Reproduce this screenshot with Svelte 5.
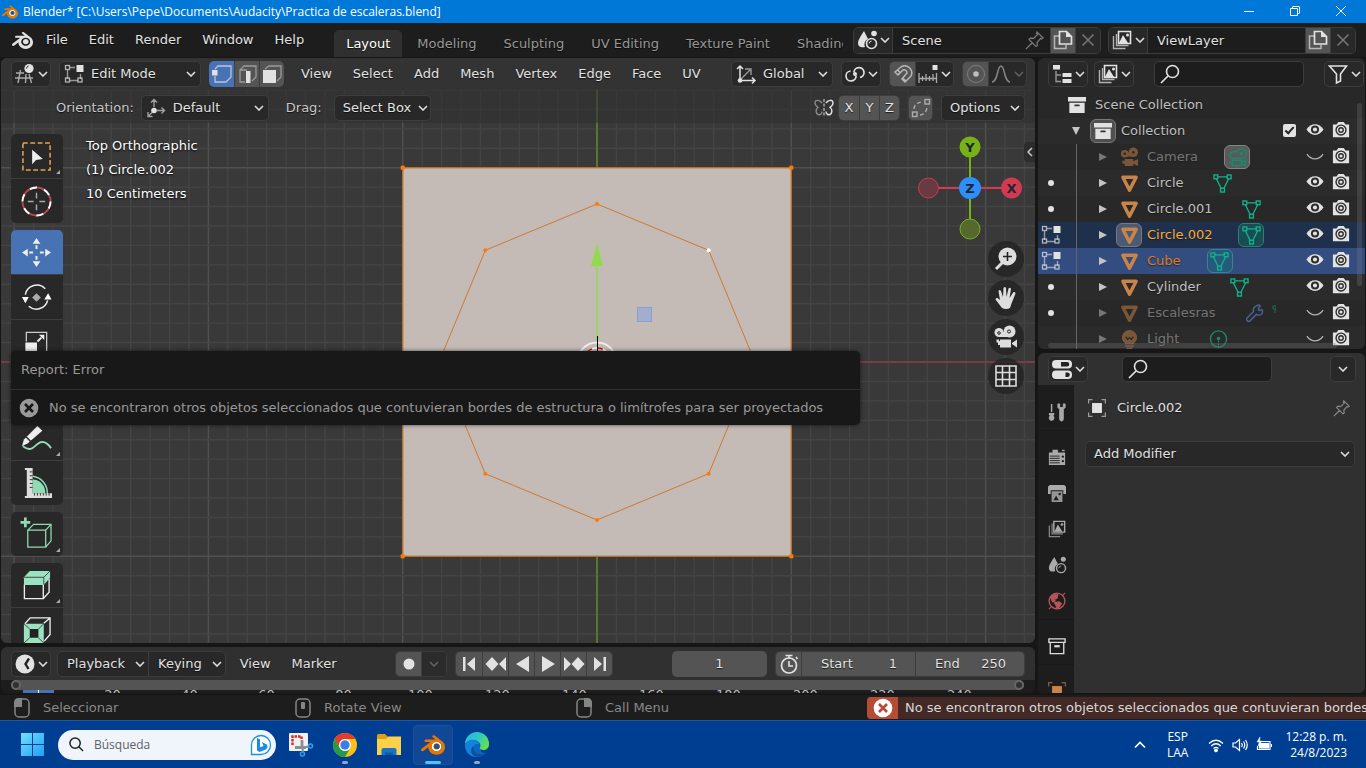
<script lang="ts">
  const blenderPath =
    'M12.51 13.214c.046-.8.438-1.506 1.03-2.006a3.424 3.424 0 0 1 2.212-.79c.85 0 1.631.3 2.211.79.592.5.983 1.206 1.028 2.005.045.823-.285 1.586-.865 2.153a3.389 3.389 0 0 1-2.374.938 3.393 3.393 0 0 1-2.376-.938c-.58-.567-.91-1.33-.865-2.152M7.35 14.831c.006.314.106.922.256 1.398a7.372 7.372 0 0 0 1.593 2.757 8.227 8.227 0 0 0 2.787 2.001 8.947 8.947 0 0 0 3.66.76 8.964 8.964 0 0 0 3.657-.772 8.285 8.285 0 0 0 2.785-2.01 7.428 7.428 0 0 0 1.592-2.762 6.964 6.964 0 0 0 .25-3.074 7.123 7.123 0 0 0-1.016-2.779 7.764 7.764 0 0 0-1.852-2.043h.002L13.566 2.55l-.02-.015c-.492-.378-1.319-.376-1.86.002-.547.382-.609 1.015-.123 1.415l-.001.001 3.126 2.543-9.53.01h-.013c-.788.001-1.545.518-1.695 1.172-.154.665.38 1.217 1.2 1.22V8.9l4.83-.01-8.62 6.617-.034.025c-.813.622-1.075 1.658-.563 2.313.52.667 1.625.668 2.447.004L7.414 14s-.069.52-.063.831zm12.09 1.741c-.97.988-2.326 1.548-3.795 1.55-1.47.004-2.827-.552-3.797-1.538a4.51 4.51 0 0 1-1.036-1.622 4.282 4.282 0 0 1 .282-3.519 4.702 4.702 0 0 1 1.153-1.371c.942-.768 2.141-1.183 3.396-1.185 1.256-.002 2.455.41 3.398 1.175.48.391.87.854 1.152 1.367a4.28 4.28 0 0 1 .522 1.706 4.236 4.236 0 0 1-.239 1.811 4.54 4.54 0 0 1-1.035 1.626';

  // 20x20 interface icons
  const icons: Record<string, string> = {
    editor3d: '<path d="M1 9h8M0 14h18M5.500 6L3 19M11 10l-.5 9M14 10l2.500 9" fill="none" stroke="currentColor" stroke-width="1.400" opacity=".7"/><circle cx="14" cy="4.500" r="4.600" fill="currentColor"/><path d="M11.500 4.500a3 3 0 0 1 2-2.600" stroke="#282828" fill="none"/>',
    editmode: '<path d="M3.500 6v9M6 3.500h5M6 16.500h8M16.500 10v5" stroke="currentColor" stroke-width="1.400" opacity=".6"/><g fill="none" stroke="currentColor" stroke-width="1.300" opacity=".75"><rect x="1.500" y="1.500" width="4" height="4"/><rect x="1.500" y="14" width="4" height="4"/><rect x="14" y="14" width="4" height="4"/></g><rect x="12.500" y="1" width="7" height="7" fill="currentColor"/>',
    vertex: '<path d="M3 5l3-3h13v11l-5 5H3v-6" fill="none" stroke="currentColor" stroke-width="1.300" opacity=".75"/><rect x="0" y="6" width="5.500" height="5.500" fill="currentColor"/>',
    edge: '<path d="M8 18H3V6l4-4h12v11l-4 4M3 6h7" fill="none" stroke="currentColor" stroke-width="1.300" opacity=".5"/><rect x="9" y="7" width="4.500" height="12" fill="currentColor"/>',
    face: '<path d="M3 5l4-3h12v11l-4 4" fill="none" stroke="currentColor" stroke-width="1.300" opacity=".5"/><rect x="1" y="6" width="13" height="13" fill="currentColor"/>',
    axes: '<path d="M4 17V2M1 5l3-3 3 3M4 16.500h15M16 13.500l3 3-3 3" fill="none" stroke="currentColor" stroke-width="1.500"/><path d="M4 16L14 6M9 5h6v6" fill="none" stroke="currentColor" stroke-width="1.400" opacity=".6"/><circle cx="4" cy="16.500" r="2.300" fill="currentColor"/>',
    orient: '<path d="M8 9V2M5 4.500L8 1.500l3 3M11 12.500h7M15.500 9.500l3 3-3 3M6 14.500l-4 4M2 14v4.500h4.500" fill="none" stroke="currentColor" stroke-width="1.400" opacity=".65"/><circle cx="8" cy="12.500" r="2.800" fill="currentColor"/>',
    pivot: '<path d="M9 8.500a5 5 0 1 1 6 5M11 11.500a5 5 0 1 1-5.500-4.500" fill="none" stroke="currentColor" stroke-width="1.700"/><circle cx="10" cy="10" r="2" fill="currentColor"/>',
    magnet: '<path d="M2 8l6-5a7 7 0 0 1 10 9l-6 6-3-3 5-6a3 3 0 0 0-4-3l-5 5zM4.500 6l3 3M9.500 14l3.500 3" fill="none" stroke="currentColor" stroke-width="1.500" opacity=".7"/>',
    increment: '<path d="M1 9v10M4.500 12v5M8 10v7M11.500 12v5M15 10v7M18.500 9v10M1 14.500h17" stroke="currentColor" stroke-width="1.300" opacity=".7"/><rect x="14.500" y="1" width="5" height="5" fill="currentColor"/>',
    prop: '<circle cx="10" cy="10" r="8.500" fill="none" stroke="currentColor" opacity=".3"/><circle cx="10" cy="10" r="2.800" fill="currentColor" opacity=".75"/>',
    falloff: '<path d="M1 18c6 0 5-16 9-16s3 16 9 16" fill="none" stroke="currentColor" stroke-width="1.500" opacity=".5"/>',
    mirror: '<path d="M8 5C6 2 1 1 1 5c0 3 2 3 3 4.500-3 2-2 6 0 7s4-1 4-3" fill="none" stroke="currentColor" stroke-width="1.400" opacity=".5"/><path d="M12 5c2-3 7-4 7 0 0 3-2 3-3 4.500 3 2 2 6 0 7s-4-1-4-3" fill="none" stroke="currentColor" stroke-width="1.500"/><path d="M10 1v18" stroke="currentColor" stroke-dasharray="3 1.500"/>',
    merge: '<g fill="none" stroke="currentColor" opacity=".65" stroke-width="1.400"><rect x="14" y="1.500" width="4.500" height="4.500"/><rect x="1.500" y="14" width="4.500" height="4.500"/><path d="M3 11c0-4 4-7 8-7M9 17c4 0 7-4 7-8" stroke-dasharray="4 2.500"/></g>',
    scene: '<path d="M7 1l4 8a6 6 0 0 0-3 8c-4 1-7 0-7-4 0-3 4-9 6-12z" fill="currentColor"/><circle cx="17" cy="3.500" r="2.800" fill="currentColor"/><circle cx="14.500" cy="13.500" r="5" fill="none" stroke="currentColor" stroke-width="1.600"/><path d="M12 13.500a3 3 0 0 1 2.500-2.500" fill="none" stroke="currentColor"/>',
    layers: '<path d="M1.500 6v12.500h12M4.500 4v11.500h12" fill="none" stroke="currentColor" stroke-width="1.400" opacity=".75"/><path d="M6.500 1.500h12v12h-12z" fill="none" stroke="currentColor" stroke-width="1.600"/><path d="M7 13l4-8 5 8z" fill="currentColor"/><circle cx="15.500" cy="5" r="1.500" fill="currentColor"/>',
    copy: '<path d="M6 6H1.500v12.500H13V15" fill="none" stroke="currentColor" stroke-width="1.500" opacity=".7"/><path d="M6.500 1.500h7l5 5V14h-12z" fill="none" stroke="currentColor" stroke-width="1.700"/><path d="M13 1v6h6z" fill="currentColor"/>',
    close: '<path d="M4.500 4.500l11 11M15.500 4.500l-11 11" stroke="currentColor" stroke-width="1.500"/>',
    pin: '<path d="M12 2l6 6-1.500 1-1-.5-3.500 4 .500 3-1.500 1L4 9.500 5.500 8l3 .500 4-4-1-1zM7.500 12.500L1 19" fill="none" stroke="currentColor" stroke-width="1.300"/>',
    tree: '<rect x="1" y="1" width="7" height="4.500" fill="currentColor"/><path d="M4 7v10.500h5M4 11h5" fill="none" stroke="currentColor" stroke-width="1.400" opacity=".6"/><rect x="10.500" y="9" width="9" height="4" fill="currentColor"/><rect x="10.500" y="15" width="9" height="4" fill="currentColor"/>',
    search: '<circle cx="12.500" cy="7.500" r="6" fill="none" stroke="currentColor" stroke-width="1.600"/><path d="M8 12l-7 7" stroke="currentColor" stroke-width="1.700"/>',
    filter: '<path d="M1.500 2h17l-6 8v7l-4 2v-9z" fill="none" stroke="currentColor" stroke-width="1.600"/>',
    box: '<path d="M0 1h20v5H0zM1.500 7.500h17V19h-17z" fill="currentColor"/><rect x="7" y="9.500" width="6" height="2" rx="1" fill="#333"/>',
    boxline: '<path d="M1 2h18v4H1zM2.500 6v12.500h15V6" fill="none" stroke="currentColor" stroke-width="1.500"/><rect x="7" y="9" width="6" height="2.500" fill="currentColor"/>',
    camera: '<circle cx="5" cy="6" r="4" fill="currentColor"/><circle cx="14" cy="4.500" r="5" fill="currentColor"/><path d="M5 5h9v4H5zM5 11.500h9V14l5-2.500V19l-5-2.500V19H5v-2.500H2.500v-3H5z" fill="currentColor"/><circle cx="5" cy="6" r="1.300" fill="#2b2b2b"/><circle cx="14" cy="4.500" r="1.300" fill="#2b2b2b"/>',
    cameraData: '<g fill="none" stroke="currentColor" stroke-width="1.500"><path d="M4 11a4 4 0 1 1 5-6.500 5.200 5.200 0 1 1 5 6.500zM4.500 13h10v5.500h-10zM14.500 15l4-2v5.500l-4-2M1.500 15.500h3"/><circle cx="14" cy="5.800" r="1.200"/></g>',
    mesh: '<path d="M3 3.500h14L10 17z" fill="none" stroke="currentColor" stroke-width="3.600" stroke-linejoin="round"/>',
    meshData: '<g fill="none" stroke="currentColor" stroke-width="1.400"><path d="M5 3h10M3.500 5l5 10M16.500 5l-5 10"/><rect x="1" y="1" width="4" height="4"/><rect x="15" y="1" width="4" height="4"/><rect x="8" y="15" width="4" height="4"/></g>',
    wrench: '<path d="M12 2c3-2 4 0 4 0l-2 3 1 2 3-1s1 1 0 4c-1 2-4 2-6 1l-7 7c-2 1-4-1-3-3l7-7c-1-3 1-5 3-6z" fill="none" stroke="currentColor" stroke-width="1.600"/>',
    bulb: '<path d="M10 0a8 8 0 0 1 8 8c0 4-3 5-3.500 7h-9C5 13 2 12 2 8a8 8 0 0 1 8-8zM5.500 16h9v1.500h-9zM7 18.500h6V20H7z" fill="currentColor"/><path d="M6 7l2 3 2-2 2 2 2-3" fill="none" stroke="#2b2b2b" stroke-width="1.300"/>',
    bulbData: '<circle cx="10" cy="9.500" r="8.500" fill="none" stroke="currentColor" stroke-width="1.400"/><circle cx="10" cy="9" r="1.800" fill="currentColor"/><path d="M10 11v9" stroke="currentColor" stroke-dasharray="2 1"/>',
    eye: '<path d="M.5 9.500c5-8 14-8 19 0-5 8-14 8-19 0z" fill="currentColor"/><circle cx="10" cy="9.500" r="4.500" fill="#2b2b2b"/><circle cx="10" cy="9.500" r="2.300" fill="currentColor"/>',
    eyeoff: '<path d="M1 8c5 7 13 7 18 0" fill="none" stroke="currentColor" stroke-width="1.500" opacity=".75"/>',
    render: '<path d="M1 4h4l2-3h6l2 3h4v14H1z" fill="currentColor"/><circle cx="10" cy="10" r="5.500" fill="none" stroke="#2b2b2b" stroke-width="1.500"/><circle cx="10" cy="10" r="2.500" fill="none" stroke="#2b2b2b" stroke-width="1.500"/>',
    props: '<rect x="0" y="1" width="20" height="8.500" rx="4" fill="currentColor"/><rect x="0" y="11.500" width="20" height="8.500" rx="4" fill="currentColor"/><path d="M9 3h6a2.300 2.300 0 0 1 0 4.600H9zM13.500 13.500h2a2.300 2.300 0 0 1 0 4.600h-2z" fill="#222"/>',
    tools: '<path d="M4 1v9" stroke="currentColor" stroke-width="1.600"/><path d="M1 11h6v2l-1 1c3 4-1 6-2 6s-5-2-2-6l-1-1z" fill="currentColor"/><path d="M11 1v4l2 2v11a2 2 0 0 0 4 0V7l2-2V1h-2v4h-4V1z" fill="currentColor" stroke="currentColor"/>',
    renderTab: '<path d="M1 5h4V2h6v3h8v14H1z" fill="currentColor"/><path d="M2 9h11M2 11.500h11M2 14h11M2 16.500h11" stroke="#1d1d1d" stroke-width="1"/><circle cx="16.500" cy="9.500" r="1.300" fill="#1d1d1d"/><circle cx="16.500" cy="14.500" r="1.300" fill="#1d1d1d"/><rect x="15.500" y="2" width="3" height="1.500" fill="currentColor"/>',
    printer: '<path d="M2 1h16l2 2v8h-3V7H3v4H0V3z" fill="currentColor"/><path d="M4 8h12v12H4z" fill="currentColor" opacity=".85"/><path d="M6 18l3-5 3 5z" fill="#1d1d1d"/><circle cx="13" cy="11" r="1.400" fill="#1d1d1d"/>',
    world: '<circle cx="10" cy="10" r="8.800" fill="none" stroke="currentColor" stroke-width="1.500"/><path d="M3 6c3-5 5-4 8-3l-1 4-3 1 1 2-3 1zM7 12l5-1 3 2-3 4-2 1-1-3zM19 1l-3 3M1 19l3-3" fill="currentColor" stroke="currentColor" stroke-width="1.200"/>',
    object: '<rect x="4.500" y="4.500" width="11" height="11" fill="currentColor"/><path d="M.7 5V.7H5M15 .7h4.300V5M19.300 15v4.300H15M5 19.300H.7V15" fill="none" stroke="currentColor" stroke-width="1.400" opacity=".6"/>',
    clock: '<circle cx="10" cy="10" r="9.500" fill="currentColor"/><path d="M14 4.500L10.500 10l3 5" fill="none" stroke="#222" stroke-width="2.400"/>',
    dot: '<circle cx="10" cy="10" r="5.500" fill="currentColor"/>',
    first: '<path d="M4 3h2.500v14H4zM16 3v14l-8-7z" fill="currentColor"/>',
    prevKey: '<path d="M6 3l6.500 7L6 17-.5 10zM20 3v14l-7-7z" fill="currentColor"/>',
    playBack: '<path d="M17 2v16L4 10z" fill="currentColor"/>',
    play: '<path d="M4 2v16l13-8z" fill="currentColor"/>',
    nextKey: '<path d="M14 3l6.500 7-6.500 7L7.500 10zM0 3v14l7-7z" fill="currentColor"/>',
    last: '<path d="M13.500 3H16v14h-2.500zM4 3v14l8-7z" fill="currentColor"/>',
    stopwatch: '<circle cx="10" cy="11.500" r="7.500" fill="none" stroke="currentColor" stroke-width="1.700"/><path d="M6.500 1.500h7M10 2v3M17 3l1.500 2M10 7v5h4" fill="none" stroke="currentColor" stroke-width="1.600"/>',
    error: '<circle cx="10" cy="10" r="9.300" fill="currentColor"/><path d="M6 6l8 8M14 6l-8 8" stroke="var(--x)" stroke-width="2.600"/>'
  };

  // 32x32 toolbar icons
  const toolIcons: Record<string, string> = {
    select: '<rect x="2" y="2" width="28" height="28" fill="none" stroke="#dfa554" stroke-width="1.600" stroke-dasharray="5 2.600"/><path d="M11.500 9v15l4-4.500 7-1z" fill="#eee"/>',
    cursor: '<circle cx="16" cy="16" r="14.500" fill="none" stroke="#b04a50" stroke-width="2"/><circle cx="16" cy="16" r="14.500" fill="none" stroke="#fff" stroke-width="2" stroke-dasharray="7.600 7.600"/><path d="M16 7v6M16 19v6M7 16h6M19 16h6" stroke="#aaa" stroke-width="1.500"/>',
    move: '<g fill="#eee"><path d="M16 1l4 6h-8zM16 31l4-6h-8zM1 16l6-4v8zM31 16l-6-4v8z"/><path d="M15 8.500h2v4h-2zM15 19.500h2v4h-2zM8.500 15h4v2h-4zM19.500 15h4v2h-4z"/></g>',
    rotate: '<g fill="none" stroke="#eee" stroke-width="1.600"><path d="M4.500 13A12 12 0 0 1 25 7M27.500 19A12 12 0 0 1 8 25"/></g><path d="M1 15.500h7L4.500 22zM24 18h7.500L28 11.500z" fill="#fff"/><path d="M16 11.500l4.500 4.500-4.500 4.500-4.500-4.500z" fill="#aaa"/>',
    scale: '<path d="M5.500 15V5.500h21V27H17" fill="none" stroke="#ccc" stroke-width="1.300"/><rect x="4.500" y="16" width="12" height="12" fill="#eee"/><path d="M17 15l4-4" stroke="#eee" stroke-width="2"/><path d="M18.500 8H24v5.500z" fill="#eee"/>',
    transform: '<path d="M16 3v26M3 16h26" stroke="#eee"/>',
    annotate: '<path d="M2 24c9 7 12-1 16-3 5-3 9-1 13 5" fill="none" stroke="#8fdcb4" stroke-width="2"/><path d="M17 3l5 5L7 21l-6 3 2-7z" fill="#eee"/><path d="M5.500 14.500l5 5" stroke="#282828" stroke-width="1.500"/>',
    measure: '<path d="M12 12a13 13 0 0 1 13 14H12z" fill="#8fdcb4"/><path d="M12 8.500A17 17 0 0 1 27 27" fill="none" stroke="#8fdcb4" stroke-width="1.500"/><path d="M4 0h8v26h20v5H4v-2h2V2H4z" fill="#ddd"/><path d="M14 26v2.500M17 26v2.500M20 26v2.500M23 26v2.500M26 26v2.500M29 26v2.500M9 4h3M9 8h3M9 12h3M9 16h3M9 20h3" stroke="#333" stroke-width="1"/>',
    addcube: '<path d="M7 11.500h18.500V29H7zM7 11.500l6-6h18v17L25.500 29M25.500 11.500l5.500-6" fill="none" stroke="#8fdcb4" stroke-width="1.300"/><path d="M4.500-1.500v10M-.500 3.500h10" stroke="#8fdcb4" stroke-width="2.800"/>',
    extrude: '<path d="M3.500 15v14.500H23V15M23 29.500l6-6.500V9" fill="none" stroke="#eee" stroke-width="1.400"/><path d="M3 7.500L9 1h21v7l-6.500 7.500H3z" fill="#9be3c0"/><path d="M3 7.500h20.500V15M23.500 7.500L30 1" fill="none" stroke="#444" stroke-width="1"/>',
    inset: '<path d="M4 9l5.500-6H30v17l-6 7M23.500 8.500L30 3" fill="none" stroke="#eee" stroke-width="1.400"/><path d="M3 9h20.500v20H3z" fill="#9be3c0"/><path d="M9 14.500h9v9H9z" fill="#222"/><path d="M3 9l6 5.500M23.500 9L18 14.500M3 29l6-5.500M23.500 29L18 23.500" stroke="#444"/>'
  };

  const toolGroups = [
    ['select', 'cursor'],
    ['move', 'rotate', 'scale', 'transform'],
    ['annotate', 'measure'],
    ['addcube'],
    ['extrude', 'inset']
  ];
  const withCorner = ['select', 'annotate', 'addcube', 'extrude'];

  const appMenus = ['File', 'Edit', 'Render', 'Window', 'Help'];
  const workspaces = ['Layout', 'Modeling', 'Sculpting', 'UV Editing', 'Texture Paint', 'Shading'];
  const meshMenus = ['View', 'Select', 'Add', 'Mesh', 'Vertex', 'Edge', 'Face', 'UV'];

  const objects = [
    { name: 'Camera', icon: 'camera', data: 'cameraData', hidden: true, boxed: true },
    { name: 'Circle', icon: 'mesh', data: 'meshData', dot: true },
    { name: 'Circle.001', icon: 'mesh', data: 'meshData', dot: true },
    { name: 'Circle.002', icon: 'mesh', data: 'meshData', state: 'active', boxed: true },
    { name: 'Cube', icon: 'mesh', data: 'meshData', state: 'selected', boxed: true },
    { name: 'Cylinder', icon: 'mesh', data: 'meshData', dot: true },
    { name: 'Escalesras', icon: 'mesh', data: 'wrench', dot: true, hidden: true },
    { name: 'Light', icon: 'bulb', data: 'bulbData', hidden: true }
  ];

  const tabGroups = [
    ['tools'],
    ['renderTab', 'printer', 'layers', 'scene', 'world'],
    ['boxline'],
    ['object']
  ];

  const frames = Array.from({ length: 12 }, (_, i) => (i + 1) * 20);
  const transport = ['first', 'prevKey', 'playBack', 'play', 'nextKey', 'last'];

  // one grid unit is ten minor lines
  const unit = 194.3;
  const gridX = Array.from({ length: 54 }, (_, i) => i - 30);
  const gridY = Array.from({ length: 34 }, (_, i) => i - 15);
  const ring = [
    [0, -158], [111.7, -111.7], [158, 0], [111.7, 111.7],
    [0, 158], [-111.7, 111.7], [-158, 0], [-111.7, -111.7]
  ];
  const corners = [[-unit, -unit], [unit, -unit], [-unit, unit], [unit, unit]];

  const message =
    'No se encontraron otros objetos seleccionados que contuvieran bordes de estructura o limítrofes para ser proyectados';
</script>

{#snippet icon(name: string)}
  <svg class="icon" viewBox="0 0 20 20" aria-hidden="true">{@html icons[name]}</svg>
{/snippet}

{#snippet chevron()}
  <svg class="chevron" viewBox="0 0 10 6" aria-hidden="true"><path d="M1 1l4 4 4-4" /></svg>
{/snippet}

{#snippet mouse(part: string)}
  <svg class="mouse" viewBox="0 0 16 20" aria-hidden="true">
    <rect x="1" y="1" width="14" height="18" rx="4" fill="none" stroke="#858585" stroke-width="1.5" />
    {#if part === 'left'}<path d="M0 9V5q0-5 5-5h3v9z" fill="#858585" />{/if}
    {#if part === 'middle'}<rect x="6" y="4" width="4" height="7" rx="1" fill="#858585" />{/if}
    {#if part === 'right'}<path d="M16 9V5q0-5-5-5H8v9z" fill="#858585" />{/if}
  </svg>
{/snippet}

<div class="screen">
  <header class="titlebar">
    <svg class="title-logo" viewBox="0 0 24 24" aria-hidden="true">
      <circle cx="15.500" cy="13.500" r="5" fill="#fff" />
      <path d={blenderPath} fill="#ea7600" />
      <circle cx="15.700" cy="13.400" r="2.800" fill="#265787" />
    </svg>
    <h1>Blender* [C:\Users\Pepe\Documents\Audacity\Practica de escaleras.blend]</h1>
    <button aria-label="Minimize"><svg viewBox="0 0 10 10"><path d="M0 5.500h10" /></svg></button>
    <button aria-label="Restore"><svg viewBox="0 0 10 10"><path d="M.5 2.500h7v7h-7zM2.500 2.500V1q0-.5.500-.5h6q.5 0 .5.500v6q0 .5-.5.500H7.500" /></svg></button>
    <button aria-label="Close"><svg viewBox="0 0 10 10"><path d="M0 0l10 10M10 0L0 10" /></svg></button>
  </header>

  <div class="topbar">
    <button class="app-menu" aria-label="Blender">
      <svg viewBox="0 0 24 24"><path d={blenderPath} fill="currentColor" /></svg>
    </button>
    <nav class="menus">
      {#each appMenus as item}<button class="menu">{item}</button>{/each}
    </nav>
    <div class="workspaces">
      {#each workspaces as tab, i}<button class:current={i === 0}>{tab}</button>{/each}
    </div>
    <div class="group datablock">
      <button class="pop" aria-label="Browse scene">{@render icon('scene')}{@render chevron()}</button>
      <input value="Scene" aria-label="Scene name" />
      <button class="pin" aria-label="Pin scene">{@render icon('pin')}</button>
      <button class="seg lit" aria-label="New scene">{@render icon('copy')}</button>
      <button class="seg dim" aria-label="Delete scene">{@render icon('close')}</button>
    </div>
    <div class="group datablock">
      <button class="pop" aria-label="Browse view layer">{@render icon('layers')}{@render chevron()}</button>
      <input value="ViewLayer" aria-label="View layer name" />
      <button class="seg lit" aria-label="New view layer">{@render icon('copy')}</button>
      <button class="seg dim" aria-label="Delete view layer">{@render icon('close')}</button>
    </div>
  </div>

  <main class="areas">
    <div class="column left">
      <section class="area viewport">
        <svg class="canvas" aria-hidden="true">
          <g transform="translate(596 304)">
            {#each gridX as i}
              <line x1={i * unit / 10} x2={i * unit / 10} y1="-304" y2="400" class:major={i % 10 === 0} />
            {/each}
            {#each gridY as i}
              <line y1={i * unit / 10} y2={i * unit / 10} x1="-596" x2="900" class:major={i % 10 === 0} />
            {/each}
            <path class="axis-x" d="M-596 0H900" />
            <path class="axis-y" d="M0-304V400" />
            <rect class="plane" x={-unit} y={-unit} width={unit * 2} height={unit * 2} />
            <polygon class="ring" points={ring.map((p) => p.join(',')).join(' ')} />
            {#each corners as [x, y]}<rect class="vert" x={x - 2} y={y - 2} width="4" height="4" />{/each}
            {#each ring as [x, y], i}<circle class="vert" class:picked={i === 1} cx={x} cy={y} r="2" />{/each}
            <circle r="19.500" fill="none" stroke="#eee" stroke-width="2" />
            <circle r="14" fill="none" stroke="#fff" stroke-width="1.500" />
            <circle r="14" fill="none" stroke="#d01010" stroke-width="1.500" stroke-dasharray="5.500 5.500" />
            <path d="M0-97V-22" stroke="#9bd568" stroke-width="2" />
            <path d="M0-119l6 23h-12z" fill="#93d94e" />
            <path d="M.5-26v18" stroke="#000" />
            <rect x="40.500" y="-54.500" width="14" height="14" fill="#a5adcc" stroke="#84a2d8" />
          </g>
        </svg>

        <div class="header">
          <button class="box pop" aria-label="Editor type">{@render icon('editor3d')}{@render chevron()}</button>
          <label class="box drop mode">{@render icon('editmode')}<select aria-label="Mode"><option>Edit Mode</option></select>{@render chevron()}</label>
          <div class="group selmode">
            <button class="seg on" aria-label="Vertex select">{@render icon('vertex')}</button>
            <button class="seg lit" aria-label="Edge select">{@render icon('edge')}</button>
            <button class="seg lit" aria-label="Face select">{@render icon('face')}</button>
          </div>
          <nav class="menus">
            {#each meshMenus as item}<button class="menu">{item}</button>{/each}
          </nav>
          <div class="header-tools">
            <label class="box drop global">{@render icon('axes')}<select aria-label="Transform orientation"><option>Global</option></select>{@render chevron()}</label>
            <button class="box pop" aria-label="Pivot point">{@render icon('pivot')}{@render chevron()}</button>
            <div class="group">
              <button class="seg lit" aria-label="Snap">{@render icon('magnet')}</button>
              <button class="pop" aria-label="Snapping">{@render icon('increment')}{@render chevron()}</button>
            </div>
            <div class="group">
              <button class="seg lit" aria-label="Proportional editing">{@render icon('prop')}</button>
              <button class="pop off" aria-label="Falloff">{@render icon('falloff')}{@render chevron()}</button>
            </div>
          </div>
        </div>

        <div class="header tool-settings">
          <label class="field">Orientation: <span class="box drop default">{@render icon('orient')}<select><option>Default</option></select>{@render chevron()}</span></label>
          <label class="field">Drag: <span class="box drop drag"><select><option>Select Box</option></select>{@render chevron()}</span></label>
          <div class="mirror">
            {@render icon('mirror')}
            <div class="group xyz">
              {#each ['X', 'Y', 'Z'] as axis}<button class="seg lit">{axis}</button>{/each}
            </div>
            <button class="box seg lit" aria-label="Auto merge">{@render icon('merge')}</button>
            <button class="box options">Options{@render chevron()}</button>
          </div>
        </div>

        <div class="body">
          <div class="toolbar">
            {#each toolGroups as tools}
              <div class="tool-group">
                {#each tools as tool}
                  <button class:on={tool === 'move'} class:corner={withCorner.includes(tool)} aria-label={tool}>
                    <svg viewBox="0 0 32 32">{@html toolIcons[tool]}</svg>
                  </button>
                {/each}
              </div>
            {/each}
          </div>
          <div class="view-info">
            <p>Top Orthographic</p>
            <p>(1) Circle.002</p>
            <p>10 Centimeters</p>
          </div>
          <div class="nav">
            <svg class="gizmo" viewBox="0 0 108 106">
              <path d="M54 12v82" stroke="#76b217" stroke-width="2" />
              <path d="M12 53h84" stroke="#d23a52" stroke-width="2" />
              <circle cx="12.500" cy="53" r="10" fill="#6a3a42" stroke="#c93b50" />
              <circle cx="54" cy="94" r="10" fill="#55692f" stroke="#76b217" />
              <circle cx="54" cy="12" r="10.500" fill="#76b217" />
              <circle cx="95.500" cy="53" r="10.500" fill="#d23a52" />
              <circle cx="54" cy="53" r="11" fill="#2c8ffb" />
              <text x="54" y="17">Y</text>
              <text x="95.500" y="58">X</text>
              <text x="54" y="58">Z</text>
            </svg>
            <button aria-label="Zoom"><svg viewBox="0 0 24 24"><path d="M2 22l7-7" stroke="#ddd" stroke-width="3" /><circle cx="13.500" cy="9.500" r="9" fill="#ddd" /><path d="M13.500 5v9M9 9.500h9" stroke="#222" stroke-width="1.600" /></svg></button>
            <button aria-label="Pan"><svg viewBox="0 0 24 24"><path d="M8 22L1.500 13.500q0-2 2-1.500L6 14 4.500 5q1-2 2.500 0l2 6 .5-9q1.500-2 2.500 0l.5 9 2-8.500q2-1.500 2.500.5L15.500 12l4-6q2-.5 2 1.500l-4 10L16 22q-4 2-8 0z" fill="#ddd" /></svg></button>
            <button aria-label="Camera view"><svg viewBox="0 0 24 24"><circle cx="5" cy="7.500" r="4.500" fill="#ddd" /><circle cx="15.500" cy="6.500" r="6" fill="#ddd" /><path d="M5 7h10v5H5zM2.500 14.500H5V16h1v-1.500h11v8H6V20H4v-2.500h-1.500zM18 18l5-3.500v8L18 19z" fill="#ddd" /><circle cx="5" cy="8" r="1.300" fill="none" stroke="#222" /><circle cx="15" cy="6.500" r="1.500" fill="none" stroke="#222" /></svg></button>
            <button aria-label="Orthographic"><svg viewBox="0 0 24 24"><path d="M2 2h20v20H2zM8.500 2v20M15.500 2v20M2 8.500h20M2 15.500h20" fill="none" stroke="#ddd" stroke-width="1.600" /></svg></button>
          </div>
          <button class="sidebar-toggle" aria-label="Show sidebar"><svg viewBox="0 0 6 10"><path d="M5 1L1 5l4 4" /></svg></button>
        </div>

        <div class="report" role="alert">
          <h2>Report: Error</h2>
          <p>{@render icon('error')}{message}</p>
        </div>
      </section>

      <section class="area timeline">
        <div class="header">
          <button class="box pop" aria-label="Editor type">{@render icon('clock')}{@render chevron()}</button>
          <div class="group playback">
            <button class="text-drop">Playback{@render chevron()}</button>
            <button class="text-drop">Keying{@render chevron()}</button>
          </div>
          <nav class="menus">
            <button class="menu">View</button>
            <button class="menu">Marker</button>
          </nav>
          <div class="header-tools">
            <div class="group record">
              <button class="seg lit" aria-label="Auto keying">{@render icon('dot')}</button>
              <button class="seg off" aria-label="Keying set">{@render chevron()}</button>
            </div>
            <div class="group transport">
              {#each transport as name}<button class="seg lit" aria-label={name}>{@render icon(name)}</button>{/each}
            </div>
            <input class="frame" value="1" aria-label="Current frame" />
            <div class="group range">
              <button class="seg lit" aria-label="Preview range">{@render icon('stopwatch')}</button>
              <label>Start<input value="1" /></label>
              <label>End<input value="250" /></label>
            </div>
          </div>
        </div>
        <div class="track"><i></i><i></i></div>
        <div class="frames">
          <b class="playhead"></b>
          {#each frames as frame}<span>{frame}</span>{/each}
        </div>
      </section>
    </div>

    <div class="column right">
      <section class="area outliner">
        <div class="header">
          <button class="box pop" aria-label="Editor type">{@render icon('tree')}{@render chevron()}</button>
          <button class="box pop" aria-label="Display mode">{@render icon('layers')}{@render chevron()}</button>
          <label class="box search">{@render icon('search')}<input aria-label="Search objects" /></label>
          <button class="box pop" aria-label="Filter">{@render icon('filter')}{@render chevron()}</button>
        </div>
        <ul class="tree">
          <li class="root">{@render icon('box')}<span class="name">Scene Collection</span></li>
          <li class="collection">
            <span class="arrow open"></span>
            <span class="badge">{@render icon('box')}</span>
            <span class="name">Collection</span>
            <span class="toggles">
              <input type="checkbox" checked aria-label="Exclude from view layer" />
              {@render icon('eye')}{@render icon('render')}
            </span>
          </li>
          {#each objects as obj}
            <li class="object {obj.state ?? ''}" class:hidden={obj.hidden}>
              <span class="status">
                {#if obj.state}{@render icon('editmode')}{:else if obj.dot}<i></i>{/if}
              </span>
              <span class="arrow"></span>
              <span class="badge obj" class:framed={obj.state === 'active'}>{@render icon(obj.icon)}</span>
              <span class="name">{obj.name}</span>
              <span class="badge data" class:blue={obj.data === 'wrench'} class:framed={obj.boxed}>{@render icon(obj.data)}</span>
              {#if obj.data === 'wrench'}
                <svg class="more" viewBox="0 0 4 8"><path d="M1 1h3v3H1zM3 4v4" /></svg>
              {/if}
              <span class="toggles">{@render icon(obj.hidden ? 'eyeoff' : 'eye')}{@render icon('render')}</span>
            </li>
          {/each}
        </ul>
        <div class="vscroll"></div>
        <div class="hscroll"></div>
      </section>

      <section class="area properties">
        <div class="header">
          <button class="box pop" aria-label="Editor type">{@render icon('props')}{@render chevron()}</button>
          <label class="box search">{@render icon('search')}<input aria-label="Search properties" /></label>
          <button class="box more-options" aria-label="Options">{@render chevron()}</button>
        </div>
        <div class="split">
          <nav class="tabs">
            {#each tabGroups as group}
              <div>
                {#each group as tab}<button class="tab-{tab}" aria-label={tab}>{@render icon(tab)}</button>{/each}
              </div>
            {/each}
          </nav>
          <div class="panel">
            <div class="crumb">{@render icon('object')}<span>Circle.002</span><button aria-label="Pin">{@render icon('pin')}</button></div>
            <label class="box drop modifier"><select aria-label="Add modifier"><option>Add Modifier</option></select>{@render chevron()}</label>
          </div>
        </div>
      </section>
    </div>
  </main>

  <footer class="statusbar">
    <span class="hint">{@render mouse('left')}Seleccionar</span>
    <span class="hint">{@render mouse('middle')}Rotate View</span>
    <span class="hint">{@render mouse('right')}Call Menu</span>
    <div class="banner"><span>{@render icon('error')}</span><p>{message}</p></div>
  </footer>

  <div class="taskbar">
    <button class="start" aria-label="Inicio">
      <svg viewBox="0 0 24 24">
        <defs><linearGradient id="win" x2="1" y2="1"><stop stop-color="#6fe3ff" /><stop offset="1" stop-color="#1ea0f2" /></linearGradient></defs>
        <path d="M0 0h11.500v11.500H0zM12.500 0H24v11.500H12.500zM0 12.500h11.500V24H0zM12.500 12.500H24V24H12.500z" fill="url(#win)" />
      </svg>
    </button>
    <label class="task-search">
      <svg class="lens" viewBox="0 0 16 16"><circle cx="6.500" cy="6.500" r="5.500" /><path d="M10.500 10.500L15 15" /></svg>
      <input placeholder="Búsqueda" />
      <svg class="bing" viewBox="0 0 22 22">
        <path d="M1.500 20.500V11a9.500 9.500 0 1 1 9.500 9.500z" fill="#fff" stroke="#1d8fe0" stroke-width="1.300" />
        <path d="M7 4l3 1.200v8L13.500 12l-1.700-4 5 2.500c1.500 2 .5 4-1 5L9.500 18 7 16.500z" fill="#1b8be4" />
      </svg>
    </label>
    <button class="app" aria-label="Recortes">
      <svg viewBox="0 0 24 24"><rect x="0" y="0" width="19" height="18" rx="1" fill="#f1f1f3" /><path d="M3.500 12V3.500h9V6" fill="none" stroke="#d92b1f" stroke-width="2.500" stroke-dasharray="2.500 1" /><path d="M13 7v9M6 14.500h11" stroke="#8b8f94" stroke-width="2.800" /><path d="M17 14l3-.500M13.500 16l.5 3" stroke="#888" stroke-width="2" /><circle cx="21.500" cy="13" r="2" fill="none" stroke="#2d9ff0" stroke-width="1.600" /><circle cx="13.500" cy="21" r="2" fill="none" stroke="#2d9ff0" stroke-width="1.600" /></svg>
    </button>
    <button class="app running" aria-label="Chrome">
      <svg viewBox="0 0 24 24"><circle cx="12" cy="12" r="12" fill="#fbc116" /><path d="M1.600 6A12 12 0 0 1 22.400 6H12a6 6 0 0 0-5.200 9z" fill="#e33b2e" /><path d="M1.600 6A12 12 0 0 0 12 24l5.200-9a6 6 0 0 1-10.400 0z" fill="#269a48" /><circle cx="12" cy="12" r="6" fill="#fff" /><circle cx="12" cy="12" r="4.700" fill="#3a7ded" /></svg>
    </button>
    <button class="app" aria-label="Explorador">
      <svg viewBox="0 0 24 24"><path d="M0 2.500Q0 1 1.500 1H8l2.500 2.500V7H0z" fill="#e0a010" /><path d="M0 6h9l2-2.500h13V22H0z" fill="#fccf4d" /><path d="M4.500 22v-5q0-2 2-2h11q2 0 2 2v5z" fill="#1873c5" /><path d="M8 22v-2.500h8V22z" fill="#0e5aa5" /></svg>
    </button>
    <button class="app active" aria-label="Blender">
      <svg viewBox="0 0 24 24"><circle cx="15.500" cy="13.500" r="5" fill="#fff" /><path d={blenderPath} fill="#ea7600" /><circle cx="15.700" cy="13.400" r="2.900" fill="#265787" /></svg>
    </button>
    <button class="app running" aria-label="Edge">
      <svg viewBox="0 0 24 24">
        <defs><linearGradient id="edge-top" x2="1" y2=".6"><stop stop-color="#2db4ec" /><stop offset=".5" stop-color="#2fc4c8" /><stop offset="1" stop-color="#65e04b" /></linearGradient></defs>
        <circle cx="12" cy="12" r="12" fill="#0b63c4" />
        <path d="M0 11A12 12 0 0 1 24 11c0 4-3 6-6 6-3 0-4-1-3-2.500C17 11 13 7 9 7c-4 0-8 2-9 4z" fill="url(#edge-top)" />
        <path d="M0 12C1 8 5 6.500 8 6.700c4 .3 6 2.800 6 4.500-3-1-6 1-6 5 0 3 2 6 5 7.800C5 24.500 0 19 0 12z" fill="#1183dc" />
        <path d="M8.500 15c0 5 5 8 12 5-3 4-9 5-12 2.500-3-2-3-7-.500-9.500z" fill="#134e99" />
        <path d="M24.500 14.500c-3 3.500-7 3-9.500 1.500l2 3.500 5 .500z" fill="#003e92" />
      </svg>
    </button>
    <div class="tray">
      <button aria-label="Iconos ocultos"><svg class="up" viewBox="0 0 12 8"><path d="M1 6.500L6 1.500l5 5" /></svg></button>
      <button class="lang">ESP<br />LAA</button>
      <button class="net" aria-label="Red y volumen">
        <svg viewBox="0 0 16 16"><path d="M1 6.500Q8 0 15 6.500M3.200 9q4.800-4.500 9.600 0M5.500 11.500q2.500-2.300 5 0" /><circle cx="8" cy="13.300" r="1.300" fill="#fff" /></svg>
        <svg viewBox="0 0 16 16"><path d="M1 6v4h2.500L7.500 13.500v-11L3.500 6zM9.500 6q1.500 2 0 4M11.500 4.500q2.500 3.500 0 7M13.500 3q3.500 5 0 10" /></svg>
        <svg viewBox="0 0 16 16"><path d="M6 4.500h8v8H1.500V9M15.500 7v3" /><rect x="3.500" y="6.500" width="9" height="4.500" fill="#fff" /><path d="M4 0L1 5h2.500L2 9l4-5H3.500z" fill="#fff" stroke-width=".500" /></svg>
      </button>
      <button class="time">12:28 p. m.<br />24/8/2023</button>
    </div>
  </div>
</div>

<style>
  :global(body) {
    margin: 0;
    background: #161616;
  }

  .screen {
    display: flex;
    flex-direction: column;
    height: 100vh;
    overflow: hidden;
    background: #161616;
    color: #e2e2e2;
    font: 13px/20px 'DejaVu Sans', sans-serif;
  }

  button,
  input,
  select {
    margin: 0;
    padding: 0;
    border: 0;
    outline: 0;
    border-radius: 0;
    background: none;
    color: inherit;
    font: inherit;
    text-shadow: inherit;
    min-width: 0;
  }

  select {
    appearance: none;
    flex: 1;
  }

  .icon {
    flex: none;
    display: block;
    width: 20px;
    height: 20px;
    overflow: visible;
  }

  .chevron {
    flex: none;
    width: 10px;
    height: 6px;
    fill: none;
    stroke: #ddd;
    stroke-width: 1.6;
  }

  /* window title */
  .titlebar {
    display: flex;
    align-items: center;
    flex: none;
    height: 23px;
    padding: 0 2px;
    background: #0078d7;
    color: #fff;
  }

  .titlebar h1 {
    flex: 1;
    margin: 0;
    font: 12px/23px 'Open Sans', 'Noto Sans', sans-serif;
  }

  .title-logo {
    width: 16px;
    height: 16px;
    margin-right: 5px;
  }

  .titlebar button {
    width: 46px;
    height: 23px;
  }

  .titlebar button svg {
    display: block;
    width: 10px;
    height: 10px;
    margin: -2px auto 0;
    fill: none;
    stroke: #fff;
    overflow: visible;
  }

  /* shared controls */
  .topbar,
  .header {
    display: flex;
    align-items: center;
    flex: none;
    box-sizing: border-box;
    text-shadow: 0 1px 1px rgba(0, 0, 0, 0.7);
  }

  .box,
  .group {
    display: flex;
    align-items: center;
    flex: none;
    box-sizing: border-box;
    height: 26px;
    border: 1px solid #3d3d3d;
    border-radius: 5px;
    background: #282828;
    overflow: hidden;
  }

  .group > * + * {
    border-left: 1px solid #3d3d3d;
  }

  .pop {
    display: flex;
    align-items: center;
    justify-content: center;
    gap: 3px;
    box-sizing: border-box;
    width: 40px;
    height: 26px;
  }

  .group .pop {
    width: 38px;
  }

  .seg {
    display: flex;
    align-items: center;
    justify-content: center;
    flex: none;
    box-sizing: border-box;
    width: 25px;
    height: 26px;
  }

  .lit {
    background: #545454;
  }

  .on {
    background: #4772b3;
  }

  .off .chevron {
    opacity: 0.3;
  }

  .dim {
    background: #282828;
    color: #777;
  }

  .drop {
    gap: 7px;
    padding: 0 4px;
  }

  .menus {
    display: flex;
    flex: none;
    gap: 1px;
  }

  .menu {
    padding: 0 10px;
    height: 26px;
  }

  .search {
    width: 150px;
    padding-left: 5px;
    background: #1d1d1d;
  }

  .search input {
    flex: 1;
    padding: 0 5px;
  }

  /* top bar */
  .topbar {
    height: 34px;
    padding: 0 10px 0 12px;
    background: #1d1d1d;
  }

  .app-menu svg {
    display: block;
    width: 21px;
    height: 21px;
  }

  .app-menu {
    margin-right: 3px;
  }

  .workspaces {
    display: flex;
    align-self: flex-end;
    flex: 1 1 0;
    gap: 3px;
    min-width: 0;
    margin: 0 10px 0 20px;
    overflow: hidden;
    color: #989898;
  }

  .workspaces button {
    flex: none;
    height: 27px;
    padding: 0 12px;
    border-radius: 5px 5px 0 0;
  }

  .workspaces .current {
    background: #303030;
    color: #fff;
  }

  .datablock {
    width: 248px;
    height: 27px;
    background: #1d1d1d;
  }

  .datablock + .datablock {
    margin-left: 7px;
  }

  .datablock .pop {
    background: #282828;
  }

  .datablock input {
    flex: 1;
    height: 26px;
    padding-left: 9px;
  }

  .datablock .pin {
    border: 0;
    margin-right: 5px;
    color: #777;
  }

  /* areas */
  .areas {
    display: flex;
    flex: 1;
    gap: 3px;
    min-height: 0;
    padding: 1px 1px 2px;
  }

  .column {
    display: flex;
    flex-direction: column;
    gap: 4px;
    min-width: 0;
    min-height: 0;
  }

  .left {
    flex: 1;
  }

  .right {
    flex: none;
    width: 327px;
  }

  .area {
    position: relative;
    display: flex;
    flex-direction: column;
    box-sizing: border-box;
    border-radius: 6px;
    overflow: hidden;
    background: #303030;
  }

  .viewport {
    flex: 1;
    min-height: 0;
    background: #393939;
  }

  .viewport .header {
    position: relative;
    height: 32px;
    padding: 0 8px 0 10px;
    background: #333;
  }

  .viewport .header > .box + .box,
  .selmode {
    margin-left: 8px;
  }

  .selmode {
    border: 0;
  }

  .mode {
    width: 142px;
  }

  .viewport .header .menus {
    margin-left: 7px;
  }

  .header-tools {
    display: flex;
    align-items: center;
    gap: 8px;
    margin-left: auto;
  }

  .global {
    width: 102px;
  }

  .viewport .header.tool-settings {
    height: 33px;
    padding: 2px 10px 0 55px;
    background: rgba(48, 48, 48, 0.6);
  }

  .field {
    display: flex;
    align-items: center;
    gap: 7px;
    margin-right: 17px;
    color: #c8c8c8;
  }

  .field .box {
    color: #e2e2e2;
  }

  .default {
    width: 128px;
  }

  .drag {
    gap: 0;
    width: 97px;
    margin-left: 5px;
    padding: 0 2px 0 8px;
  }

  .mirror {
    display: flex;
    align-items: center;
    gap: 8px;
    margin-left: auto;
  }

  .mirror .icon {
    color: #ddd;
  }

  .xyz {
    margin-left: -4px;
  }

  .xyz .seg {
    width: 20px;
  }

  .options {
    justify-content: space-between;
    width: 84px;
    padding: 0 4px 0 8px;
  }

  .canvas {
    position: absolute;
    width: 100%;
    height: 100%;
  }

  .canvas line {
    stroke: #444;
    stroke-width: 1.4;
  }

  .canvas .major {
    stroke: #505050;
  }

  .axis-x {
    stroke: #863a44;
    stroke-width: 1.6;
  }

  .axis-y {
    stroke: #5f812c;
    stroke-width: 1.6;
  }

  .plane {
    fill: #c5bbb6;
    stroke: #b87228;
    stroke-width: 1.4;
  }

  .ring {
    fill: none;
    stroke: #cb7a32;
  }

  .vert {
    fill: #ff7a00;
  }

  .vert.picked {
    fill: #fff;
  }

  .body {
    position: relative;
    display: flex;
    flex: 1;
    min-height: 0;
    overflow: hidden;
    padding: 11px 11px 0 10px;
  }

  .toolbar {
    display: flex;
    flex-direction: column;
    gap: 7px;
    width: 52px;
  }

  .tool-group {
    display: flex;
    flex: none;
    flex-direction: column;
    gap: 1px;
    border-radius: 5px;
    overflow: hidden;
    background: #3d3d3d;
  }

  .tool-group button {
    position: relative;
    height: 44px;
    background: #282828;
  }

  .tool-group button.on {
    background: #4772b3;
  }

  .tool-group svg {
    display: block;
    width: 31px;
    height: 31px;
    margin: 0 10px;
    overflow: visible;
  }

  .corner::after {
    content: '';
    position: absolute;
    right: 3px;
    bottom: 4px;
    border: 2px solid transparent;
    border-right-color: #aaa;
    border-bottom-color: #aaa;
  }

  .view-info {
    flex: 1;
    margin-left: 23px;
    color: #fff;
    line-height: 24px;
    text-shadow: 0 1px 2px #000;
  }

  .view-info p {
    margin: 0;
  }

  .nav {
    display: flex;
    flex-direction: column;
    align-items: flex-end;
    gap: 3px;
    margin-top: 1px;
  }

  .gizmo {
    flex: none;
    width: 108px;
    height: 106px;
    margin-bottom: -3px;
    font-weight: bold;
    text-anchor: middle;
  }

  .gizmo text {
    fill: #1c2530;
  }

  .nav button {
    flex: none;
    width: 36px;
    height: 36px;
    border-radius: 50%;
    background: rgba(34, 34, 34, 0.75);
  }

  .nav button svg {
    display: block;
    width: 24px;
    height: 24px;
    margin: 0 auto;
  }

  .sidebar-toggle {
    position: absolute;
    top: 19px;
    right: 0;
    width: 11px;
    height: 20px;
    border-radius: 4px 0 0 4px;
    background: #2c2c2c;
  }

  .sidebar-toggle svg {
    display: block;
    width: 6px;
    height: 10px;
    margin: 0 auto;
    fill: none;
    stroke: #ccc;
    stroke-width: 1.5;
  }

  .report {
    position: absolute;
    left: 10px;
    top: 293px;
    width: 849px;
    border-radius: 5px;
    background: #181818;
    color: #999;
    box-shadow: 0 0 4px rgba(0, 0, 0, 0.6);
    --x: #181818;
  }

  .report h2 {
    margin: 0;
    padding: 0 10px;
    border-bottom: 1px solid #303030;
    font-size: 13px;
    font-weight: normal;
    line-height: 38px;
  }

  .report p {
    display: flex;
    align-items: center;
    gap: 10px;
    height: 35px;
    margin: 0;
    padding: 0 8px;
    white-space: nowrap;
  }

  /* timeline */
  .timeline {
    flex: none;
    height: 46px;
    background: #1d1d1d;
  }

  .timeline .header {
    height: 33px;
    padding: 0 10px;
    background: #303030;
  }

  .playback {
    margin: 0 4px 0 6px;
  }

  .text-drop {
    display: flex;
    align-items: center;
    justify-content: space-between;
    gap: 10px;
    height: 26px;
    padding: 0 3px 0 9px;
  }

  .record .off {
    background: #2b2b2b;
  }

  .transport .seg {
    width: 26px;
  }

  .frame {
    width: 95px;
    height: 26px;
    margin: 0 0 0 51px;
    border-radius: 5px;
    background: #545454;
    text-align: center;
  }

  .range label {
    display: flex;
    align-items: center;
    justify-content: space-between;
    box-sizing: border-box;
    width: 114px;
    height: 26px;
    padding: 0 18px 0 19px;
    background: #545454;
  }

  .range label + label {
    width: 109px;
  }

  .range input {
    width: 40px;
    text-align: right;
  }

  .track {
    display: flex;
    justify-content: space-between;
    flex: none;
    height: 10px;
    margin: 0 11px 0 10px;
    border-radius: 5px;
    background: #545454;
  }

  .track i {
    box-sizing: border-box;
    width: 10px;
    height: 10px;
    border: 2px solid #666;
    border-radius: 50%;
    background: #303030;
  }

  .frames {
    display: flex;
    flex: 1;
    min-height: 0;
    overflow: hidden;
    color: #bbb;
    line-height: 14px;
  }

  .frames span {
    flex: none;
    width: 77px;
    margin-top: -2px;
    text-align: center;
  }

  .playhead {
    flex: none;
    width: 31px;
    height: 4px;
    margin: 0 20px 0 22px;
    background: linear-gradient(90deg, #4772b3 15px, #fff 15px 16px, #4772b3 16px);
  }

  /* outliner */
  .outliner {
    flex: none;
    height: 291px;
    background: #282828;
  }

  .outliner .header {
    gap: 6px;
    height: 34px;
    padding: 0 1px 2px 10px;
  }

  .outliner .search {
    margin: 0 auto;
  }

  .tree {
    margin: 0;
    padding: 0;
    list-style: none;
    color: #c0c0c0;
  }

  .tree li {
    position: relative;
    display: flex;
    align-items: center;
    height: 26px;
    padding-right: 15px;
    text-shadow: 0 1px 1px rgba(0, 0, 0, 0.5);
  }

  .tree li:nth-child(even) {
    background: #2b2b2b;
  }

  .tree li.root {
    gap: 8px;
    padding-left: 29px;
  }

  .tree .icon {
    color: #e2e2e2;
  }

  .root .icon,
  .collection .badge .icon {
    transform: scale(0.9);
  }

  .tree li.collection {
    padding-left: 34px;
  }

  .arrow {
    flex: none;
    width: 0;
    margin-left: 9px;
    border: 4px solid transparent;
    border-left: 8px solid #c4c4c4;
    border-right: 0;
  }

  .arrow.open {
    margin: 0 6px 0 0;
    border: 4px solid transparent;
    border-top: 8px solid #c4c4c4;
    border-bottom: 0;
  }

  .badge {
    display: flex;
    align-items: center;
    justify-content: center;
    flex: none;
    box-sizing: border-box;
    width: 26px;
    height: 24px;
    border: 1px solid transparent;
    border-radius: 6px;
  }

  .collection .badge {
    margin: 0 5px 0 4px;
    border-color: #777;
    background: #505050;
  }

  .status {
    display: flex;
    justify-content: center;
    width: 26px;
    margin-right: 26px;
  }

  .status i {
    width: 6px;
    height: 6px;
    border-radius: 50%;
    background: #e2e2e2;
  }

  .object::before {
    content: '';
    position: absolute;
    left: 38px;
    top: 0;
    width: 1px;
    height: 26px;
    background: #666;
  }

  .object .obj {
    margin: 0 5px 0 9px;
  }

  .tree .obj .icon {
    width: 19px;
    height: 19px;
    color: #c98449;
  }

  .tree .data {
    margin-left: 26px;
  }

  .tree .data .icon {
    width: 19px;
    height: 19px;
    color: #0fb58c;
  }

  .tree .data.blue .icon {
    color: #5878c0;
  }

  .obj.framed {
    border-color: #778;
    background: #4b5b74;
  }

  .data.framed {
    border-color: #30806f;
    background: #1a4c55;
  }

  .hidden .data.framed {
    border-color: #aaa;
    background: #707070;
  }

  .hidden .name,
  .hidden .arrow,
  .hidden .badge,
  .hidden .more {
    opacity: 0.5;
  }

  .hidden .data {
    opacity: 0.7;
  }

  .more {
    width: 4px;
    height: 8px;
    margin: -8px 0 0 4px;
    fill: none;
    stroke: #0fb58c;
  }

  .tree li.active {
    background: #1e304c;
  }

  .active .name {
    color: #ffaa2b;
  }

  .tree li.selected {
    background: #334d80;
  }

  .selected .name {
    color: #e07a12;
  }

  .selected .data.framed {
    border-color: #408090;
    background: #265a7a;
  }

  .toggles {
    display: flex;
    align-items: center;
    gap: 8px;
    margin-left: auto;
  }

  .toggles .icon {
    width: 18px;
    height: 18px;
    margin-bottom: 2px;
  }

  .toggles input {
    appearance: none;
    position: relative;
    width: 13px;
    height: 13px;
    margin: 0 2px 2px 0;
    border-radius: 2px;
    background: #e2e2e2;
  }

  .toggles input:checked::after {
    content: '';
    position: absolute;
    left: 4px;
    top: 1px;
    width: 3px;
    height: 7px;
    border: solid #222;
    border-width: 0 2px 2px 0;
    transform: rotate(42deg);
  }

  .vscroll,
  .hscroll {
    position: absolute;
    border-radius: 3px;
    background: rgba(120, 120, 120, 0.3);
  }

  .vscroll {
    top: 45px;
    right: 3px;
    width: 5px;
    height: 183px;
  }

  .hscroll {
    left: 10px;
    right: 28px;
    bottom: 1px;
    height: 5px;
  }

  /* properties */
  .properties {
    flex: 1;
    min-height: 0;
  }

  .properties .header {
    height: 32px;
    padding: 0 9px 0 10px;
  }

  .properties .search {
    margin: 0 auto 0 34px;
  }

  .more-options {
    justify-content: center;
    width: 26px;
  }

  .split {
    display: flex;
    flex: 1;
    min-height: 0;
  }

  .tabs {
    display: flex;
    flex-direction: column;
    gap: 9px;
    width: 36px;
    padding-top: 9px;
    background: #1d1d1d;
    color: #aaa;
  }

  .tabs div {
    flex: none;
    border-bottom: 1px solid #181818;
    margin-bottom: -1px;
  }

  .tabs button {
    display: flex;
    align-items: center;
    justify-content: center;
    box-sizing: border-box;
    width: 36px;
    height: 36px;
    padding-left: 2px;
  }

  .tabs .icon {
    width: 18px;
    height: 18px;
  }

  .tab-world {
    color: #b5555a;
  }

  .tab-boxline {
    color: #ddd;
  }

  .tab-object {
    color: #c98449;
  }

  .panel {
    flex: 1;
    padding: 10px 10px 0 11px;
  }

  .crumb {
    display: flex;
    align-items: center;
    gap: 11px;
    height: 26px;
    margin-bottom: 20px;
    padding: 0 4px 0 3px;
    text-shadow: 0 1px 1px rgba(0, 0, 0, 0.6);
  }

  .crumb .icon {
    width: 18px;
    height: 18px;
  }

  .crumb button {
    margin-left: auto;
    color: #888;
  }

  .modifier {
    padding-left: 8px;
    text-shadow: 0 1px 1px rgba(0, 0, 0, 0.6);
  }

  /* status bar */
  .statusbar {
    display: flex;
    align-items: center;
    flex: none;
    height: 25px;
    padding-left: 14px;
    background: #1d1d1d;
    color: #888;
    overflow: hidden;
  }

  .hint {
    display: flex;
    align-items: center;
    flex: none;
    gap: 13px;
    width: 281px;
  }

  .mouse {
    width: 16px;
    height: 20px;
  }

  .banner {
    display: flex;
    flex: 1;
    min-width: 0;
    height: 22px;
    margin-left: 10px;
    border-radius: 4px 0 0 4px;
    background: #432925;
    color: #d8d8d8;
    line-height: 22px;
    white-space: nowrap;
    overflow: hidden;
  }

  .banner span {
    display: flex;
    align-items: center;
    justify-content: center;
    flex: none;
    width: 31px;
    margin-right: 7px;
    background: #b44c36;
    color: #fff;
    --x: #b44c36;
  }

  .banner p {
    margin: 0;
  }

  /* taskbar */
  .taskbar {
    display: flex;
    align-items: center;
    flex: none;
    box-sizing: border-box;
    height: 48px;
    padding: 0 19px 0 21px;
    border-top: 1px solid #2457a0;
    background: #003e92;
    color: #fff;
    font: 12px/16px 'Open Sans', 'Noto Sans', sans-serif;
  }

  .start svg {
    display: block;
    width: 23px;
    height: 23px;
  }

  .task-search {
    display: flex;
    align-items: center;
    box-sizing: border-box;
    width: 218px;
    height: 30px;
    margin: 0 5px 0 14px;
    padding: 0 4px 0 11px;
    border-radius: 15px;
    background: #f0f4fb;
    color: #5c5f66;
  }

  .task-search input {
    flex: 1;
    padding-left: 10px;
  }

  .task-search input::placeholder {
    color: #5c5f66;
    opacity: 1;
  }

  .lens {
    width: 15px;
    height: 15px;
    fill: none;
    stroke: #222;
    stroke-width: 1.6;
  }

  .bing {
    width: 22px;
    height: 22px;
  }

  .app {
    position: relative;
    box-sizing: border-box;
    width: 40px;
    height: 40px;
    margin-right: 4px;
    border: 1px solid transparent;
    border-radius: 4px;
  }

  .app svg {
    display: block;
    width: 24px;
    height: 24px;
    margin: 0 auto;
    overflow: visible;
  }

  .app.active {
    border-color: #1d509b;
    background: #114895;
  }

  .app.running::after,
  .app.active::after {
    content: '';
    position: absolute;
    left: 16px;
    bottom: 0;
    width: 6px;
    height: 3px;
    border-radius: 2px;
    background: #8fa6cf;
  }

  .app.active::after {
    left: 11px;
    width: 16px;
    background: #4cc2ff;
  }

  .tray {
    display: flex;
    align-items: center;
    margin-left: auto;
    text-align: right;
  }

  .tray svg {
    display: block;
    width: 16px;
    height: 16px;
    fill: none;
    stroke: #fff;
    stroke-width: 1.2;
  }

  .tray .up {
    width: 12px;
    height: 8px;
    stroke-width: 1.6;
  }

  .lang {
    margin: 0 20px 0 21px;
    text-align: center;
  }

  .net {
    display: flex;
    gap: 8px;
    margin-right: 13px;
  }

  .time {
    text-align: right;
  }
</style>
